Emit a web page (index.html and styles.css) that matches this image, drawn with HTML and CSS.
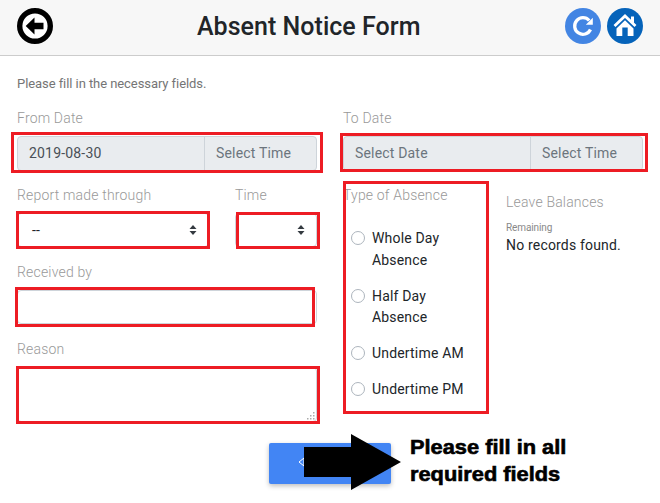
FILE: index.html
```html
<!DOCTYPE html>
<html lang="en">
<head>
<meta charset="utf-8">
<title>Absent Notice Form</title>
<link rel="stylesheet" href="styles.css">
</head>
<body>
<header class="bar">
  <svg class="icon" viewBox="0 0 36 36"><circle cx="18" cy="18" r="15.3" fill="#fff" stroke="#000" stroke-width="5.4"/><path d="M8.700 18 17.500 9.500V14.800H26.500V21.200H17.500V26.500Z" fill="#000"/></svg>
  <h1 class="title">Absent Notice Form</h1>
  <div class="actions">
    <svg class="icon" viewBox="0 0 36 36"><circle cx="18" cy="18" r="18" fill="#4385e3"/><path d="M24.200 12.500A8.300 8.300 0 1 0 25.500 21.500" fill="none" stroke="#fff" stroke-width="3.300"/><path d="M27.800 9.800V16.800H20.800Z" fill="#fff"/></svg>
    <svg class="icon" viewBox="0 0 36 36"><circle cx="18" cy="18" r="18" fill="#0563ba"/><path d="M7.500 18 18 8 28.500 18" fill="none" stroke="#fff" stroke-width="2.800"/><path d="M24 8.500h3v7l-3-3Z" fill="#fff"/><path d="M18 12.300 26.500 20.500V28H20.700V19.500H15.300V28H9.500V20.500Z" fill="#fff"/></svg>
  </div>
</header>
<main class="page">
  <p class="intro">Please fill in the necessary fields.</p>
  <div class="columns">
    <section class="column">
      <div class="field">
        <div class="label">From Date</div>
        <div class="group"><span class="date filled">2019-08-30</span><span class="time">Select Time</span><i class="mark mark-from"></i></div>
      </div>
      <div class="pair">
        <div class="field">
          <div class="label">Report made through</div>
          <div class="control select"><span class="dash">--</span><svg class="caret" viewBox="0 0 8 10"><path d="M4 0 7.500 4H.5ZM4 10 .5 6H7.500Z"/></svg><i class="mark mark-report"></i></div>
        </div>
        <div class="field">
          <div class="label">Time</div>
          <div class="control select"><span></span><svg class="caret" viewBox="0 0 8 10"><path d="M4 0 7.500 4H.5ZM4 10 .5 6H7.500Z"/></svg><i class="mark mark-time"></i></div>
        </div>
      </div>
      <div class="field">
        <div class="label">Received by</div>
        <div class="control"><i class="mark mark-received"></i></div>
      </div>
      <div class="field">
        <div class="label">Reason</div>
        <div class="control area"><svg class="grip" viewBox="0 0 8 8"><path d="M6 0h1.500v1.500H6ZM3 3h1.500v1.500H3ZM6 3h1.500v1.500H6ZM0 6h1.500v1.500H0ZM3 6h1.500v1.500H3ZM6 6h1.500v1.500H6Z"/></svg><i class="mark mark-reason"></i></div>
      </div>
    </section>
    <section class="column">
      <div class="field">
        <div class="label">To Date</div>
        <div class="group"><span class="date">Select Date</span><span class="time">Select Time</span><i class="mark mark-to"></i></div>
      </div>
      <div class="details">
        <div class="types">
          <div class="label">Type of Absence</div>
          <ul class="options">
            <li class="option"><i class="radio"></i><span>Whole Day<br>Absence</span></li>
            <li class="option"><i class="radio"></i><span>Half Day<br>Absence</span></li>
            <li class="option"><i class="radio"></i><span>Undertime AM</span></li>
            <li class="option"><i class="radio"></i><span>Undertime PM</span></li>
          </ul>
          <i class="mark mark-type"></i>
        </div>
        <div class="balances">
          <div class="label">Leave Balances</div>
          <div class="remaining">Remaining</div>
          <div class="records">No records found.</div>
        </div>
      </div>
    </section>
  </div>
  <footer class="submit">
    <div class="button">
      <svg class="send" viewBox="0 0 10 10"><path d="M0 5 5 1V9Z" fill="none" stroke="#fff"/></svg>
      <svg class="arrow" viewBox="0 0 97 56"><path d="M0 13H47V0L97 28 47 56V43H0Z"/></svg>
    </div>
    <p class="note">Please fill in all<br>required fields</p>
  </footer>
</main>
</body>
</html>
```
FILE: styles.css
```css
* { box-sizing: border-box; }
body { margin: 0; min-height: 503px; background: #fff; color: #212529; font: 14px/20px Roboto, sans-serif; letter-spacing: .18px; }
.bar { height: 56px; padding: 8px 17px 11px; display: flex; background: #f7f7f7; border-bottom: 1px solid #ccc; }
.icon { width: 36px; height: 36px; display: block; }
.title { margin: 0 0 0 144px; font-size: 25px; line-height: 37px; font-weight: 500; letter-spacing: 0.03px; }
.actions { display: flex; gap: 6px; margin-left: auto; }
.page { padding: 18px 17px 0; }
.intro { margin: 0 0 14px; font-size: 13px; color: #757575; letter-spacing: -.07px; }
.columns { display: grid; grid-template-columns: 300px 300px; gap: 26px; }
.column { display: flex; flex-direction: column; gap: 15px; }
.label { height: 20px; margin-bottom: 8px; color: #999; font-weight: 300; white-space: nowrap; }
.group { position: relative; height: 35px; display: grid; grid-template-columns: 186px 1fr; background: #e9ecef; border: 1px solid #ced4da; border-radius: 4px; line-height: 33px; color: #6c757d; margin-bottom: -1px; }
.group span { padding-left: 11px; }
.group .time { border-left: 1px solid #ced4da; }
.group .filled { color: #495057; }
.pair { display: grid; grid-template-columns: 192px 82px; gap: 26px; }
.control { position: relative; height: 34px; border: 1px solid #ced4da; border-radius: 4px; }
.select { display: flex; align-items: center; justify-content: space-between; padding: 0 11px 0 14px; }
.caret { width: 8px; height: 10px; fill: #343a40; }
.area { height: 55px; }
.grip { position: absolute; right: 1px; bottom: 1px; width: 8px; height: 8px; fill: #aaa; }
.mark { position: absolute; border: 3px solid #ed1c24; }
.mark-from { inset: -5px -7px -3px -7px; }
.mark-to { inset: -4px -6px -2px -4px; }
.mark-report { inset: -3px -2px -3px -2px; }
.mark-time { inset: -2px -4px -3px 0; }
.mark-received { inset: -4px 1px -4px -3px; }
.mark-reason { inset: -2px -4px -3px -2px; }
.mark-type { inset: -4px 17px -9px 0; }
.details { display: grid; grid-template-columns: 163px 1fr; }
.types { position: relative; height: 220px; }
.options { list-style: none; margin: 0; padding: 15px 0 0 8px; display: flex; flex-direction: column; gap: 14px; }
.option { display: flex; gap: 7px; line-height: 21.8px; }
.radio { width: 14px; height: 14px; margin-top: 3px; border: 1px solid #adb5bd; border-radius: 50%; }
.balances { padding-top: 7px; }
.balances .label { margin-bottom: 0; }
.remaining { margin-top: 9px; font-size: 10px; line-height: 14px; color: #888; letter-spacing: -.1px; }
.records { line-height: 20px; }
.submit { display: flex; align-items: flex-start; margin: 21px 0 0 252px; gap: 19px; }
.button { position: relative; width: 122px; height: 41px; background: #4285f4; border-radius: 2px; box-shadow: 0 2px 5px rgba(0,0,0,.26); }
.send { position: absolute; left: 30px; top: 14px; width: 10px; height: 10px; }
.arrow { position: absolute; left: 35px; top: -9px; width: 97px; height: 56px; }
.note { margin: -9px 0 0; color: #000; font: bold 20px/27px "Liberation Sans", sans-serif; letter-spacing: 0; -webkit-text-stroke: .6px #000; white-space: nowrap; transform: scaleX(1.09); transform-origin: 0 0; }
```
